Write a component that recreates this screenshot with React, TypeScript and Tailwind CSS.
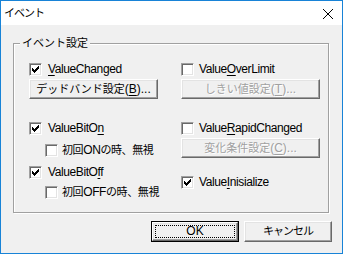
import React from 'react';

const font = "font-['Liberation_Sans','Noto_Sans_CJK_JP',sans-serif]";

// Japanese runs are set a touch smaller so they keep the narrow MS UI Gothic widths
const J: React.FC<{ children: React.ReactNode; className?: string }> = ({ children, className = '' }) => (
  <span className={`text-[11px] ${className}`}>{children}</span>
);

const Check: React.FC<{ checked?: boolean }> = ({ checked }) => (
  <div className="w-[13px] h-[13px] shrink-0 bg-white border border-t-[#a0a0a0] border-l-[#a0a0a0] border-b-white border-r-white shadow-[inset_1px_1px_0_#696969,inset_-1px_-1px_0_#e3e3e3]">
    {checked && (
      <svg width="11" height="11" viewBox="0 0 11 11" shapeRendering="crispEdges">
        {[
          [2, 4],
          [3, 5],
          [4, 6],
          [5, 5],
          [6, 4],
          [7, 3],
          [8, 2],
        ].map(([x, y]) => (
          <rect key={x} x={x} y={y} width="1" height="3" fill="#000" />
        ))}
      </svg>
    )}
  </div>
);

const CheckRow: React.FC<{ checked?: boolean; gap?: string; children: React.ReactNode }> = ({
  checked,
  gap = 'gap-[6px]',
  children,
}) => (
  <div className={`flex items-center h-[13px] ${gap} text-[12px] leading-[13px] tracking-[-0.4px] text-black whitespace-nowrap`}>
    <Check checked={checked} />
    <span>{children}</span>
  </div>
);

const Btn: React.FC<{ w: string; disabled?: boolean; children: React.ReactNode; className?: string }> = ({
  w,
  disabled,
  children,
  className = '',
}) => (
  <div
    className={`${w} h-[20px] flex items-center justify-center bg-[#f0f0f0] border border-t-white border-l-white border-r-[#696969] border-b-[#696969] shadow-[inset_-1px_-1px_0_#a0a0a0,inset_1px_1px_0_#e3e3e3] text-[12px] leading-[13px] whitespace-nowrap ${
      disabled ? 'text-[#a0a0a0] [text-shadow:1px_1px_0_#fff]' : 'text-black'
    } ${className}`}
  >
    {children}
  </div>
);

export default function App() {
  return (
    <div className={`w-[343px] h-[254px] flex flex-col border border-[#1883d7] bg-[#f0f0f0] ${font}`}>
      {/* Title bar */}
      <div className="h-[24px] bg-white flex items-center justify-between pl-[3px] pr-[9px] shrink-0">
        <span className="text-[11px] leading-[13px] tracking-[-1px] text-black">イベント</span>
        <svg width="10" height="10" viewBox="0 0 10 10" className="mt-[2px]">
          <path d="M0 0 L10 10 M10 0 L0 10" stroke="#000" strokeWidth="1" />
        </svg>
      </div>

      {/* Client */}
      <div className="flex-1 flex flex-col pl-[12px]">
        <div className="relative mt-[18px] w-[316px] h-[170px] border border-[#a0a0a0] shadow-[inset_1px_1px_0_#fff,1px_1px_0_#fff]">
          <span className="absolute left-[6px] top-[-8px] px-[2px] bg-[#f0f0f0] text-[11px] leading-[14px] text-black">
            イベント設定
          </span>

          <div className="flex pl-[15px] pt-[19px]">
            {/* Left column */}
            <div className="w-[152px] flex flex-col">
              <CheckRow checked>
                <u className="underline-offset-2">V</u>alueChanged
              </CheckRow>
              <Btn w="w-[129px]" className="mt-[3px]">
                <J>デッドバンド設定</J>(<u className="underline-offset-2">B</u>)...
              </Btn>
              <div className="mt-[23px]">
                <CheckRow checked>
                  ValueBitO<u className="underline-offset-2">n</u>
                </CheckRow>
              </div>
              <div className="mt-[9px] pl-[16px]">
                <CheckRow gap="gap-[4px]">
                  <J>初回</J>ON<J>の時、無視</J>
                </CheckRow>
              </div>
              <div className="mt-[9px]">
                <CheckRow checked>
                  ValueBitO<u className="underline-offset-2">f</u>f
                </CheckRow>
              </div>
              <div className="mt-[7px] pl-[16px]">
                <CheckRow gap="gap-[4px]">
                  <J>初回</J>OFF<J>の時、無視</J>
                </CheckRow>
              </div>
            </div>

            {/* Right column */}
            <div className="flex flex-col">
              <CheckRow gap="gap-[5px]">
                Value<u className="underline-offset-2">O</u>verLimit
              </CheckRow>
              <Btn w="w-[139px]" disabled className="mt-[3px]">
                <J>しきい値設定</J>(<u className="underline-offset-2">T</u>)...
              </Btn>
              <div className="mt-[23px]">
                <CheckRow gap="gap-[5px]">
                  Value<u className="underline-offset-2">R</u>apidChanged
                </CheckRow>
              </div>
              <Btn w="w-[139px]" disabled className="mt-[3px]">
                <J>変化条件設定</J>(<u className="underline-offset-2">C</u>)...
              </Btn>
              <div className="mt-[18px]">
                <CheckRow checked gap="gap-[5px]">
                  Value<u className="underline-offset-2">I</u>nisialize
                </CheckRow>
              </div>
            </div>
          </div>
        </div>

        {/* Bottom buttons */}
        <div className="flex justify-end gap-[5px] mt-[8px] pr-[10px]">
          <div className="w-[88px] h-[21px] border border-black">
            <div className="w-full h-full flex items-center justify-center bg-[#f0f0f0] border border-t-white border-l-white border-r-[#696969] border-b-[#696969] shadow-[inset_-1px_-1px_0_#a0a0a0,inset_1px_1px_0_#e3e3e3] p-[2px]">
              <div className="w-full h-full flex items-center justify-center border border-dotted border-black text-[12px] leading-[13px] text-black">
                OK
              </div>
            </div>
          </div>
          <Btn w="w-[88px]" className="!h-[21px]">
            <J className="tracking-[-1px]">キャンセル</J>
          </Btn>
        </div>
      </div>
    </div>
  );
}
